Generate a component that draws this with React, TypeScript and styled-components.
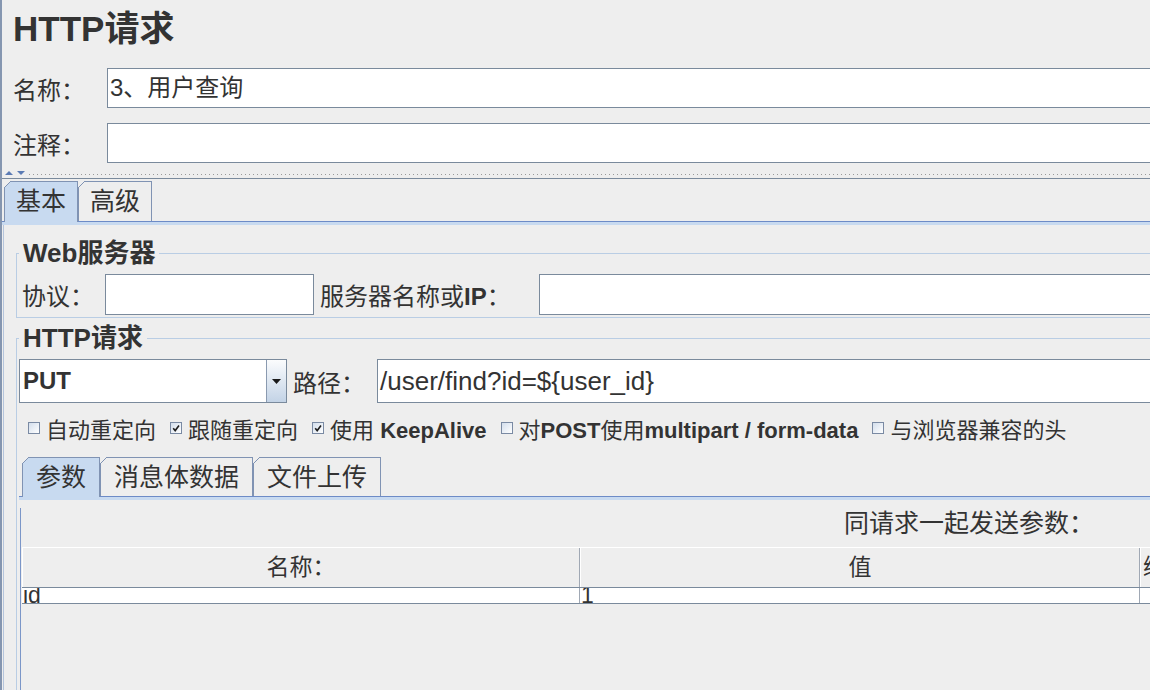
import React from 'react';
import styled, { createGlobalStyle } from 'styled-components';

const GlobalStyle = createGlobalStyle`
  html, body {
    margin: 0;
    padding: 0;
    background: #eeeeee;
    overflow: hidden;
  }
  body {
    font-family: "Liberation Sans", "Noto Sans CJK SC", sans-serif;
    color: #333333;
  }
  * {
    box-sizing: border-box;
  }
`;

const Window = styled.div`
  width: 1918px;
  height: 690px;
  overflow: hidden;
  border-left: 2px solid #8596b0;
  display: flex;
  flex-direction: column;
`;

const Title = styled.h1`
  margin: 0;
  flex: none;
  height: 68px;
  padding-left: 11px;
  font-size: 35px;
  line-height: 58px;
  font-weight: bold;
  white-space: nowrap;
`;

const FieldRow = styled.div<{ $gap?: number }>`
  display: flex;
  align-items: center;
  flex: none;
  height: 40px;
  margin-top: ${p => p.$gap ?? 0}px;
  padding-left: 11px;
`;

const Label = styled.span<{ $width: number; $gap?: number }>`
  flex: none;
  width: ${p => p.$width}px;
  margin-left: ${p => p.$gap ?? 0}px;
  font-size: 24px;
  white-space: nowrap;
`;

const Bold = styled.b`
  font-weight: bold;
`;

const TextField = styled.div<{ $h: number; $width?: number; $size?: number }>`
  flex: ${p => (p.$width ? 'none' : '1')};
  width: ${p => (p.$width ? `${p.$width}px` : 'auto')};
  height: ${p => p.$h}px;
  border: 1px solid #7a8a9c;
  background: #ffffff;
  padding-left: 2px;
  font-size: ${p => p.$size ?? 24}px;
  line-height: ${p => p.$h - 2}px;
  white-space: nowrap;
  overflow: hidden;
`;

const Splitter = styled.div`
  flex: none;
  height: 16px;
  border-bottom: 1px solid #7a8a9c;
  display: flex;
  align-items: flex-start;
  gap: 4px;
  padding: 8px 0 0 3px;
`;

const SplitArrow = styled.span<{ $down?: boolean }>`
  width: 0;
  height: 0;
  border-left: 4px solid transparent;
  border-right: 4px solid transparent;
  ${p => (p.$down ? 'border-top: 4px solid #5b7bb4;' : 'border-bottom: 4px solid #5b7bb4;')}
`;

const SplitDots = styled.span`
  flex: 1;
  height: 1px;
  margin-top: 3px;
  background: repeating-linear-gradient(90deg, #9a9a9a 0 1px, transparent 1px 4px);
`;

const TabBar = styled.div<{ $h: number; $inset: number; $top?: number }>`
  display: flex;
  align-items: flex-end;
  flex: none;
  height: ${p => p.$h + 3}px;
  margin-top: ${p => p.$top ?? 0}px;
  padding-left: ${p => p.$inset}px;
  border-bottom: 1px solid #6d8bc7;
`;

const Tab = styled.div<{ $active?: boolean; $h: number }>`
  position: relative;
  flex: none;
  height: ${p => (p.$active ? p.$h + 1 : p.$h)}px;
  margin-bottom: ${p => (p.$active ? -1 : 0)}px;
  padding: 0 ${p => (p.$h > 39 ? 11 : 13)}px;
  border: 1px solid #8093b3;
  border-bottom: none;
  background: ${p => (p.$active ? '#c8daf0' : 'transparent')};
  font-size: 25px;
  line-height: ${p => p.$h - 1}px;
  white-space: nowrap;

  &::before {
    content: '';
    position: absolute;
    top: -1px;
    left: -1px;
    width: 7px;
    height: 7px;
    background: linear-gradient(
      to bottom right,
      #eeeeee calc(50% - 0.7px),
      #8093b3 calc(50% - 0.7px),
      #8093b3 calc(50% + 0.7px),
      transparent calc(50% + 0.7px)
    );
  }
`;

const TabBand = styled.div`
  flex: none;
  height: 3px;
  background: #c8daf0;
`;

const TabPanel = styled.div`
  flex: 1;
  min-height: 0;
  overflow: hidden;
  margin-left: 1px;
  border-left: 1px solid #b5c5dc;
  display: flex;
  flex-direction: column;
`;

const Group = styled.fieldset<{ $top: number; $bottom?: number }>`
  flex: none;
  min-width: 0;
  margin: ${p => p.$top}px 0 0 12px;
  padding: 0 0 ${p => p.$bottom ?? 0}px 2px;
  border: 1px solid #b9cde4;
`;

const Legend = styled.legend`
  padding: 0 4px;
  font-size: 26px;
  line-height: 26px;
  font-weight: bold;
  white-space: nowrap;
`;

const GroupRow = styled.div<{ $h: number; $inset?: number }>`
  display: flex;
  align-items: center;
  height: ${p => p.$h}px;
  margin-top: 8px;
  padding-left: ${p => p.$inset ?? 0}px;
`;

const Combo = styled.div`
  flex: none;
  display: flex;
  width: 268px;
  height: 44px;
  border: 1px solid #7a8a9c;
  background: #ffffff;
`;

const ComboValue = styled.span`
  flex: 1;
  padding-left: 3px;
  font-size: 24px;
  line-height: 42px;
  font-weight: bold;
`;

const ComboButton = styled.span`
  flex: none;
  width: 20px;
  border-left: 1px solid #8a9ab0;
  background: linear-gradient(#fbfcfd, #c3d3e6);
  display: flex;
  align-items: center;
  justify-content: center;
`;

const CheckRow = styled.div`
  display: flex;
  align-items: center;
  gap: 14px;
  height: 24px;
  margin-top: 13px;
  padding-left: 9px;
  font-size: 22px;
  white-space: nowrap;
`;

const CheckItem = styled.span`
  display: flex;
  align-items: center;
  gap: 6px;
`;

const Box = styled.span`
  flex: none;
  width: 12px;
  height: 12px;
  border: 1px solid #7a8aa3;
  background: linear-gradient(135deg, #d3deec 0%, #ffffff 100%);
  display: flex;
  align-items: center;
  justify-content: center;
`;

const Band = styled(TabBand)``;

const InnerPanel = styled.div`
  margin-left: 1px;
  min-height: 320px;
  border-left: 1px solid #7b96c8;
`;

const ParamsTitle = styled.div`
  margin-top: 8px;
  height: 30px;
  line-height: 30px;
  font-size: 25px;
  text-align: center;
  white-space: nowrap;
`;

const Table = styled.div`
  margin: 9px 0 0 1px;
`;

const HeadRow = styled.div`
  display: flex;
  height: 41px;
  border-top: 1px solid #ffffff;
  border-bottom: 1px solid #7a8a9c;
`;

const HeadCell = styled.div<{ $w: number }>`
  flex: none;
  width: ${p => p.$w}px;
  border-left: 1px solid #ffffff;
  border-right: 1px solid #a0a8b4;
  font-size: 23px;
  line-height: 39px;
  text-align: center;
  white-space: nowrap;
  overflow: hidden;
`;

const BodyRow = styled.div`
  display: flex;
  height: 16px;
  background: #ffffff;
  border-bottom: 1px solid #7a8a9c;
`;

const BodyCell = styled.div<{ $w: number }>`
  flex: none;
  width: ${p => p.$w}px;
  border-right: 1px solid #a0a8b4;
  padding-left: 1px;
  font-size: 23px;
  line-height: 15px;
  white-space: nowrap;
  overflow: hidden;
`;

const columns = [
  { title: '名称：', width: 558, value: 'id' },
  { title: '值', width: 560, value: '1' },
  { title: '编码？', width: 75, value: '' },
  { title: '内容类型', width: 560, value: 'text/plain' },
  { title: '包含等于？', width: 75, value: '' },
];

const Check: React.FC<{ on?: boolean; children: React.ReactNode }> = ({ on, children }) => (
  <CheckItem>
    <Box>
      {on && (
        <svg width="10" height="10" viewBox="0 0 10 10">
          <path d="M2.2 5.2 L4.2 7.6 L8 2.6" stroke="#1e1e1e" strokeWidth="1.6" fill="none" />
        </svg>
      )}
    </Box>
    <span>{children}</span>
  </CheckItem>
);

export default function App() {
  return (
    <>
      <GlobalStyle />
      <Window>
        <Title>HTTP请求</Title>

        <FieldRow>
          <Label $width={94}>名称：</Label>
          <TextField $h={40}>3、用户查询</TextField>
        </FieldRow>
        <FieldRow $gap={15}>
          <Label $width={94}>注释：</Label>
          <TextField $h={40} />
        </FieldRow>

        <Splitter>
          <SplitArrow />
          <SplitArrow $down />
          <SplitDots />
        </Splitter>

        <TabBar $h={40} $inset={2}>
          <Tab $h={40} $active>基本</Tab>
          <Tab $h={40}>高级</Tab>
        </TabBar>
        <TabBand />

        <TabPanel>
          <Group $top={15} $bottom={2}>
            <Legend>Web服务器</Legend>
            <GroupRow $h={41} $inset={3}>
              <Label $width={83}>协议：</Label>
              <TextField $h={41} $width={209} />
              <Label $width={219} $gap={6}>
                服务器名称或<Bold>IP</Bold>：
              </Label>
              <TextField $h={41} />
            </GroupRow>
          </Group>

          <Group $top={7}>
            <Legend>HTTP请求</Legend>
            <GroupRow $h={44}>
              <Combo>
                <ComboValue>PUT</ComboValue>
                <ComboButton>
                  <svg width="9" height="5" viewBox="0 0 9 5">
                    <path d="M0 0 H9 L4.5 5 Z" fill="#1a1a1a" />
                  </svg>
                </ComboButton>
              </Combo>
              <Label $width={84} $gap={6}>路径：</Label>
              <TextField $h={44} $size={26}>/user/find?id=${'{'}user_id{'}'}</TextField>
            </GroupRow>

            <CheckRow>
              <Check>自动重定向</Check>
              <Check on>跟随重定向</Check>
              <Check on>
                使用 <Bold>KeepAlive</Bold>
              </Check>
              <Check>
                对<Bold>POST</Bold>使用<Bold>multipart / form-data</Bold>
              </Check>
              <Check>与浏览器兼容的头</Check>
            </CheckRow>

            <TabBar $h={39} $inset={3} $top={15}>
              <Tab $h={39} $active>参数</Tab>
              <Tab $h={39}>消息体数据</Tab>
              <Tab $h={39}>文件上传</Tab>
            </TabBar>
            <Band />

            <InnerPanel>
              <ParamsTitle>同请求一起发送参数：</ParamsTitle>
              <Table>
                <HeadRow>
                  {columns.map(c => (
                    <HeadCell key={c.title} $w={c.width}>{c.title}</HeadCell>
                  ))}
                </HeadRow>
                <BodyRow>
                  {columns.map(c => (
                    <BodyCell key={c.title} $w={c.width}>{c.value}</BodyCell>
                  ))}
                </BodyRow>
              </Table>
            </InnerPanel>
          </Group>
        </TabPanel>
      </Window>
    </>
  );
}
